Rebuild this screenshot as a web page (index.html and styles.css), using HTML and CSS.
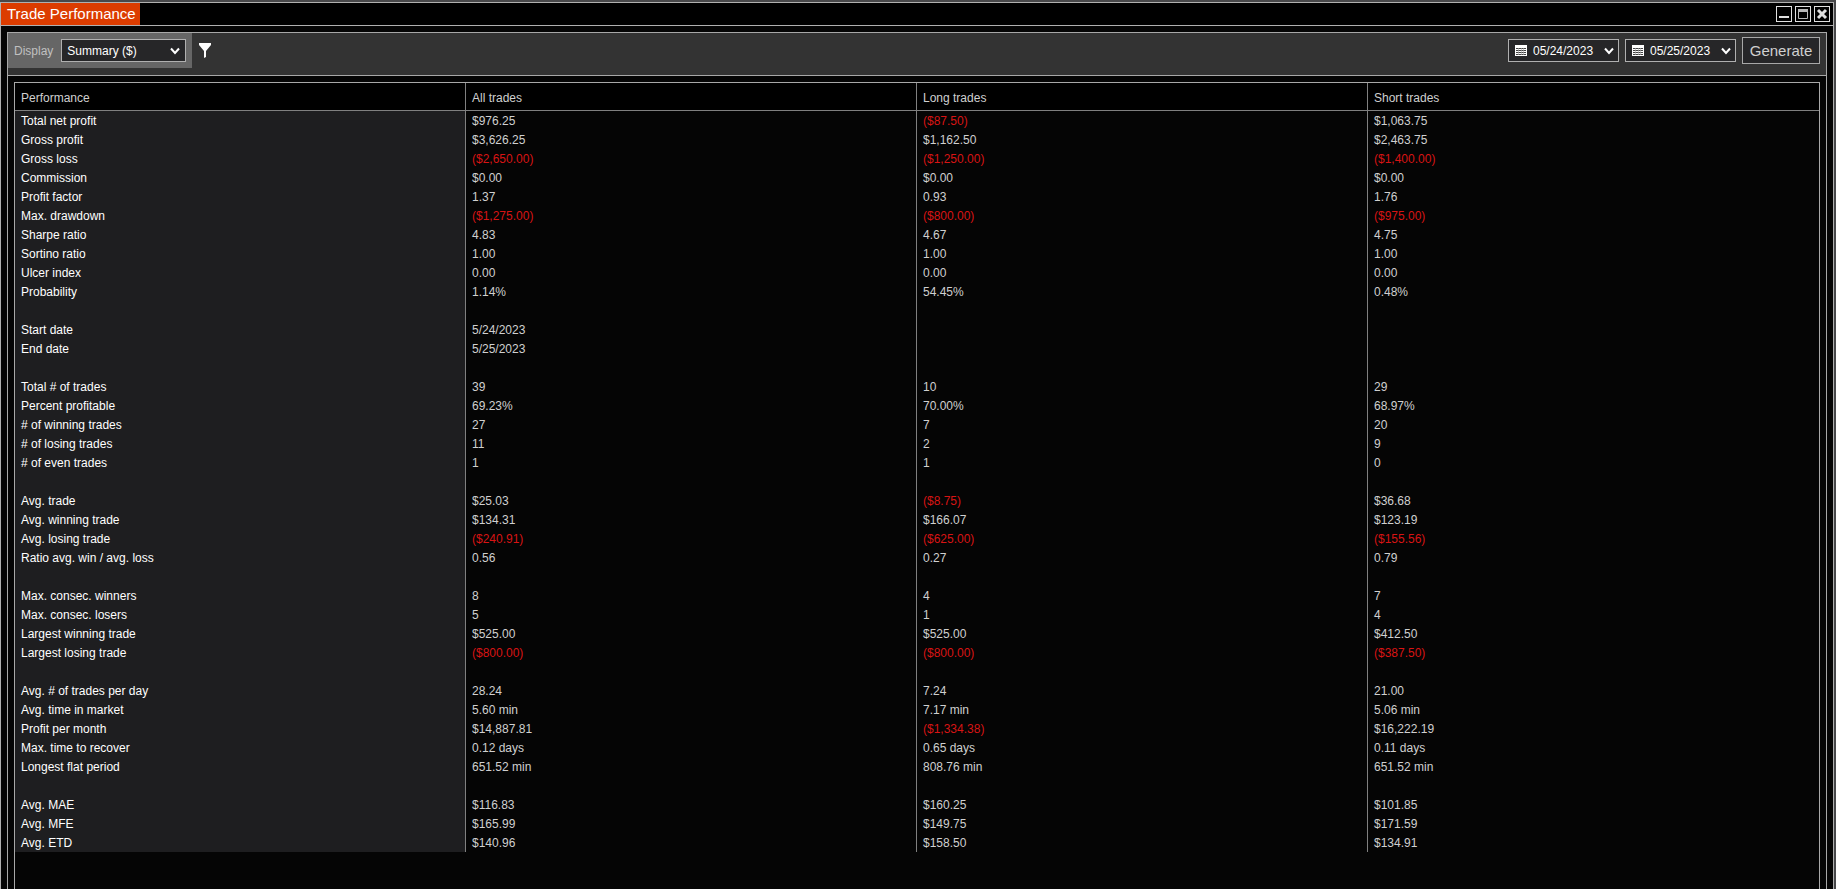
FILE: index.html
```html
<!DOCTYPE html>
<html lang="en">
  <head>
    <meta charset="utf-8" />
    <title>Trade Performance</title>
    <link rel="stylesheet" href="styles.css">
  </head>
  <body>
    <div class="window">
      <header class="titlebar">
        <h1>Trade Performance</h1>
        <div class="window-buttons">
          <button aria-label="Minimize">
            <svg width="14" height="14"><path d="M2 10h10" stroke="#e0e0e0" stroke-width="2" /></svg>
          </button>
          <button aria-label="Maximize">
            <svg width="14" height="14"><path d="M2.5 3v8.500h9V3" fill="none" stroke="#b8b8b8" /><path d="M2 3.500h10" stroke="#b8b8b8" stroke-width="3" /></svg>
          </button>
          <button aria-label="Close">
            <svg width="14" height="14"><path d="M3 3l8 8M11 3l-8 8" stroke="#e0e0e0" stroke-width="3" /></svg>
          </button>
        </div>
      </header>

      <main class="panel">
        <section class="toolbar">
          <div class="display">
            <label for="display">Display</label>
            <span class="picker">
              <select id="display">
                <option>Summary ($)</option>
              </select>
              <svg class="chevron" width="10" height="8"><path d="M1 1.500l4 4.500l4-4.500" /></svg>
            </span>
          </div>
          <button class="btn-filter" aria-label="Filter">
            <svg width="12" height="15"><path d="M0 0h12v2L7 8v6L5 15V8L0 2z" fill="#fff" /></svg>
          </button>
          <div class="range">
            <label class="picker date">
              <svg class="calendar" width="12" height="11"><path d="M0 0h12v11H0z" fill="#fff" /><path d="M1 3.500h10M1 5.500h10M1 7.500h10M1 9.500h10" stroke="#444" /><path d="M3.500 3v7M6.500 3v7M8.500 3v7" stroke="#aaa" stroke-opacity=".6" /></svg>
              <input type="text" value="05/24/2023" aria-label="Start date">
              <svg class="chevron" width="10" height="8"><path d="M1 1.500l4 4.500l4-4.500" /></svg>
            </label>
            <label class="picker date">
              <svg class="calendar" width="12" height="11"><path d="M0 0h12v11H0z" fill="#fff" /><path d="M1 3.500h10M1 5.500h10M1 7.500h10M1 9.500h10" stroke="#444" /><path d="M3.500 3v7M6.500 3v7M8.500 3v7" stroke="#aaa" stroke-opacity=".6" /></svg>
              <input type="text" value="05/25/2023" aria-label="End date">
              <svg class="chevron" width="10" height="8"><path d="M1 1.500l4 4.500l4-4.500" /></svg>
            </label>
            <button class="btn-generate">Generate</button>
          </div>
        </section>

        <section class="report">
          <table>
            <thead>
              <tr><th>Performance</th><th>All trades</th><th>Long trades</th><th>Short trades</th></tr>
            </thead>
            <tbody>
              <tr><th>Total net profit</th><td>$976.25</td><td class="loss">($87.50)</td><td>$1,063.75</td></tr>
              <tr><th>Gross profit</th><td>$3,626.25</td><td>$1,162.50</td><td>$2,463.75</td></tr>
              <tr><th>Gross loss</th><td class="loss">($2,650.00)</td><td class="loss">($1,250.00)</td><td class="loss">($1,400.00)</td></tr>
              <tr><th>Commission</th><td>$0.00</td><td>$0.00</td><td>$0.00</td></tr>
              <tr><th>Profit factor</th><td>1.37</td><td>0.93</td><td>1.76</td></tr>
              <tr><th>Max. drawdown</th><td class="loss">($1,275.00)</td><td class="loss">($800.00)</td><td class="loss">($975.00)</td></tr>
              <tr><th>Sharpe ratio</th><td>4.83</td><td>4.67</td><td>4.75</td></tr>
              <tr><th>Sortino ratio</th><td>1.00</td><td>1.00</td><td>1.00</td></tr>
              <tr><th>Ulcer index</th><td>0.00</td><td>0.00</td><td>0.00</td></tr>
              <tr><th>Probability</th><td>1.14%</td><td>54.45%</td><td>0.48%</td></tr>
              <tr><th></th><td></td><td></td><td></td></tr>
              <tr><th>Start date</th><td>5/24/2023</td><td></td><td></td></tr>
              <tr><th>End date</th><td>5/25/2023</td><td></td><td></td></tr>
              <tr><th></th><td></td><td></td><td></td></tr>
              <tr><th>Total # of trades</th><td>39</td><td>10</td><td>29</td></tr>
              <tr><th>Percent profitable</th><td>69.23%</td><td>70.00%</td><td>68.97%</td></tr>
              <tr><th># of winning trades</th><td>27</td><td>7</td><td>20</td></tr>
              <tr><th># of losing trades</th><td>11</td><td>2</td><td>9</td></tr>
              <tr><th># of even trades</th><td>1</td><td>1</td><td>0</td></tr>
              <tr><th></th><td></td><td></td><td></td></tr>
              <tr><th>Avg. trade</th><td>$25.03</td><td class="loss">($8.75)</td><td>$36.68</td></tr>
              <tr><th>Avg. winning trade</th><td>$134.31</td><td>$166.07</td><td>$123.19</td></tr>
              <tr><th>Avg. losing trade</th><td class="loss">($240.91)</td><td class="loss">($625.00)</td><td class="loss">($155.56)</td></tr>
              <tr><th>Ratio avg. win / avg. loss</th><td>0.56</td><td>0.27</td><td>0.79</td></tr>
              <tr><th></th><td></td><td></td><td></td></tr>
              <tr><th>Max. consec. winners</th><td>8</td><td>4</td><td>7</td></tr>
              <tr><th>Max. consec. losers</th><td>5</td><td>1</td><td>4</td></tr>
              <tr><th>Largest winning trade</th><td>$525.00</td><td>$525.00</td><td>$412.50</td></tr>
              <tr><th>Largest losing trade</th><td class="loss">($800.00)</td><td class="loss">($800.00)</td><td class="loss">($387.50)</td></tr>
              <tr><th></th><td></td><td></td><td></td></tr>
              <tr><th>Avg. # of trades per day</th><td>28.24</td><td>7.24</td><td>21.00</td></tr>
              <tr><th>Avg. time in market</th><td>5.60 min</td><td>7.17 min</td><td>5.06 min</td></tr>
              <tr><th>Profit per month</th><td>$14,887.81</td><td class="loss">($1,334.38)</td><td>$16,222.19</td></tr>
              <tr><th>Max. time to recover</th><td>0.12 days</td><td>0.65 days</td><td>0.11 days</td></tr>
              <tr><th>Longest flat period</th><td>651.52 min</td><td>808.76 min</td><td>651.52 min</td></tr>
              <tr><th></th><td></td><td></td><td></td></tr>
              <tr><th>Avg. MAE</th><td>$116.83</td><td>$160.25</td><td>$101.85</td></tr>
              <tr><th>Avg. MFE</th><td>$165.99</td><td>$149.75</td><td>$171.59</td></tr>
              <tr><th>Avg. ETD</th><td>$140.96</td><td>$158.50</td><td>$134.91</td></tr>
            </tbody>
          </table>
        </section>
      </main>
    </div>
  </body>
</html>
```
FILE: styles.css
```css
* {
  box-sizing: border-box;
}
body {
  margin: 0;
  height: 100vh;
  display: flex;
  padding: 2px 2px 0 0;
  background: #48484a;
  color: #d0d0d0;
  font-family: 'Liberation Sans', Arial, sans-serif;
  font-size: 12px;
}
button, input, select {
  margin: 0;
  font: inherit;
  color: inherit;
}

.window {
  flex: 1;
  display: flex;
  flex-direction: column;
  background: #050505;
  border: 1px solid #b0b0b0;
  border-bottom: 0;
}

.titlebar {
  display: flex;
  justify-content: space-between;
  align-items: center;
  height: 23px;
  background: #000;
  border-bottom: 1px solid #b0b0b0;
}
.titlebar h1 {
  margin: 0;
  padding: 0 4px 0 6px;
  background: #dc3c00;
  color: #fff;
  font-size: 15px;
  font-weight: normal;
  line-height: 22px;
}
.window-buttons {
  display: flex;
  gap: 3px;
  padding-right: 3px;
}
.window-buttons button {
  display: flex;
  padding: 0;
  background: #000;
  border: 1px solid #e0e0e0;
}

.panel {
  flex: 1;
  display: flex;
  flex-direction: column;
  margin: 6px 6px 0;
  border: 1px solid #a8a8a8;
  border-bottom: 0;
}

.toolbar {
  display: flex;
  align-items: flex-start;
  height: 43px;
  background: #333;
  border-bottom: 1px solid #a8a8a8;
}
.display {
  display: flex;
  align-items: center;
  gap: 8px;
  height: 35px;
  padding: 0 6px;
  background: #666;
  color: #c0c0c0;
}
.picker {
  display: flex;
  align-items: center;
  height: 23px;
  padding: 0 5px;
  background: #262628;
  border: 1px solid #b0b0b0;
  color: #fff;
}
.picker select, .picker input {
  appearance: none;
  padding: 0;
  border: 0;
  outline: 0;
  background: none;
}
.picker select {
  width: 103px;
}
.picker.date {
  padding: 0 4px 0 6px;
}
.picker input {
  width: 71px;
  margin-left: 6px;
}
.chevron path {
  fill: none;
  stroke: #fff;
  stroke-width: 2;
}

.btn-filter {
  display: flex;
  margin: 10px 7px;
  padding: 0;
  background: none;
  border: 0;
}
.range {
  display: flex;
  align-items: center;
  gap: 6px;
  margin: 4px 6px 0 auto;
}
.btn-generate {
  width: 78px;
  height: 27px;
  padding: 0;
  background: #262628;
  border: 1px solid #a8a8a8;
  font-size: 15px;
}

.report {
  flex: 1;
  margin: 6px 6px 0;
  border: 1px solid #a8a8a8;
  border-bottom: 0;
}
.report table {
  width: 100%;
  table-layout: fixed;
  border-collapse: separate;
  border-spacing: 0;
}
.report th, .report td {
  height: 19px;
  padding: 1px 6px 0;
  border-right: 1px solid #808080;
  font-weight: normal;
  line-height: 18px;
  text-align: left;
}
.report th:last-child, .report td:last-child {
  border-right: 0;
}
.report thead th {
  height: 28px;
  padding-top: 2px;
  background: #000;
  border-bottom: 1px solid #808080;
}
.report tbody th {
  background: #1e1e20;
  color: #fff;
}
.report .loss { /* negative amounts */
  color: #d81414;
}
```
